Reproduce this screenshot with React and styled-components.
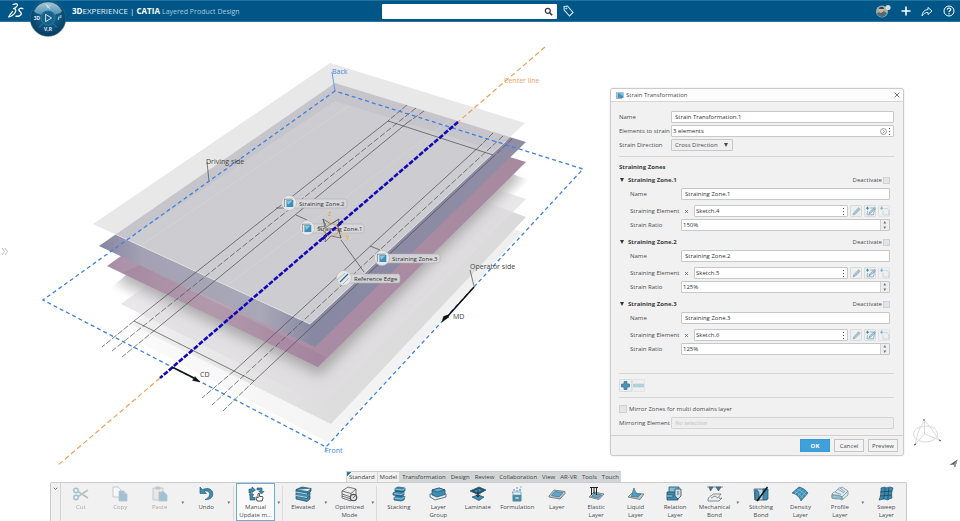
import React, { useState } from "react";
import styled, { createGlobalStyle, css } from "styled-components";

const GlobalStyle = createGlobalStyle`
  * { box-sizing: border-box; }
  body { margin: 0; background: #fff; color: #4b4d50; font: 6px/8px "Open Sans", "Noto Sans", sans-serif; }
  button, input, select { font: inherit; color: inherit; margin: 0; padding: 0; }
  button { border: 0; background: none; cursor: pointer; }
  svg { display: block; flex: none; }
`;

const Page = styled.div`
  display: flex;
  flex-direction: column;
  min-height: 100vh;
`;

/* ---------- top bar ---------- */

const TopBar = styled.header`
  position: relative;
  display: grid;
  grid-template-columns: 1fr auto 1fr;
  align-items: center;
  height: 22px;
  padding: 0 5px 0 7px;
  background: #005686;
  border-top: 1px solid #1f73a0;
  border-bottom: 1px solid #2f7398;
  color: #fff;
`;

const Brand = styled.div`
  display: flex;
  align-items: center;
  gap: 48px;
`;

const BrandTitle = styled.h1`
  margin: 0;
  font: 400 8px/12px "Open Sans", "Noto Sans", sans-serif;
  white-space: nowrap;
  color: #e3eef5;
  b { color: #fff; }
  small { font-size: 7px; color: #a9cbe0; }
`;

const Compass = styled.button`
  position: absolute;
  left: 30px;
  top: -1px;
  z-index: 2;
`;

const SearchGroup = styled.div`
  display: flex;
  align-items: center;
  gap: 6px;
  margin-right: 6px;
`;

const SearchBox = styled.label`
  display: flex;
  align-items: center;
  width: 175px;
  height: 15px;
  padding-right: 4px;
  background: #fff;
  color: #333;
  border-radius: 1px;
  input { flex: 1; min-width: 0; height: 13px; padding: 0 4px; border: 0; outline: 0; background: none; font-size: 8px; }
`;

const TopActions = styled.nav`
  display: flex;
  justify-content: flex-end;
  align-items: center;
  gap: 10px;
  button { display: grid; place-items: center; }
`;

/* ---------- workspace ---------- */

const Workspace = styled.main`
  position: relative;
  display: flex;
  align-items: flex-start;
  flex: 1;
`;

const SceneArea = styled.section`
  flex: 1;
  min-width: 0;
  svg { width: 100%; height: auto; }
`;

const PanelHandle = styled.button`
  position: absolute;
  left: 1px;
  top: 225px;
`;

const SideRail = styled.aside`
  align-self: stretch;
  width: 56px;
  display: flex;
  flex-direction: column;
  justify-content: flex-end;
  align-items: flex-start;
  padding: 0 2px 3px 8px;
  gap: 12px;
  svg:last-child { align-self: flex-end; }
`;

/* ---------- dialog ---------- */

const Dialog = styled.form`
  width: 294px;
  margin-top: 66px;
  background: #f1f1f1;
  border: 1px solid #cbcbcb;
  border-radius: 3px;
  box-shadow: 0 0 2px #ddd;
`;

const TitleBar = styled.div`
  display: flex;
  align-items: center;
  gap: 2px;
  height: 13px;
  padding: 0 3px 0 5px;
  background: #fdfdfd;
  border-bottom: 1px solid #d6d6d6;
  border-radius: 3px 3px 0 0;
  h2 { flex: 1; margin: 0; font: inherit; }
`;

const DialogBody = styled.div`
  padding: 9px 9px 6px 8px;
`;

const FieldGrid = styled.div`
  display: grid;
  grid-template-columns: ${(p) => p.$label}px minmax(0, 1fr);
  align-items: center;
  row-gap: 2px;
  margin-top: ${(p) => p.$top || 0}px;
`;

const Label = styled.label`
  white-space: nowrap;
`;

const boxed = css`
  height: 12px;
  background: #fff;
  border: 1px solid #c6c8ca;
  border-radius: 1px;
`;

const TextField = styled.input`
  ${boxed}
  width: 100%;
  padding: 0 3px;
  color: #333;
  outline: 0;
  &:disabled { background: #eee; border-color: #d4d4d4; }
  &::placeholder { color: #bfc1c3; font-style: italic; }
`;

const FieldShell = styled.div`
  ${boxed}
  display: flex;
  align-items: center;
  flex: 1;
  min-width: 0;
  padding-right: ${(p) => (p.$flush ? 0 : 2)}px;
  gap: 1px;
  input { flex: 1; min-width: 0; height: 10px; padding: 0 1px; border: 0; outline: 0; background: none; color: #333; }
`;

const SelectField = styled.select`
  ${boxed}
  appearance: none;
  width: 62px;
  padding: 0 3px;
  background: #efefef url("data:image/svg+xml,%3Csvg xmlns='http://www.w3.org/2000/svg' width='4' height='4'%3E%3Cpath d='M0 0h4L2 4z' fill='%23444'/%3E%3C/svg%3E") no-repeat right 4px center;
`;

const Divider = styled.hr`
  height: 1px;
  margin: ${(p) => p.$top || 5}px 0 5px;
  border: 0;
  background: #d5d6d7;
`;

const SectionTitle = styled.h3`
  margin: 0;
  font-size: 6px;
  font-weight: 700;
  line-height: 11px;
  color: #3c3e40;
`;

const Zones = styled.div`
  display: flex;
  flex-direction: column;
  gap: 4px;
  padding-right: 4px;
`;

const ZoneHeader = styled.div`
  display: flex;
  justify-content: space-between;
  align-items: center;
  height: 14px;
  margin-bottom: 1px;
`;

const ZoneToggle = styled.button`
  display: flex;
  align-items: center;
  gap: 4px;
  padding-left: 1px;
  font-weight: 700;
  color: #3c3e40;
  &::before { content: ""; border: 2px solid transparent; border-top: 4px solid #333; border-bottom: 0; }
`;

const CheckLabel = styled.label`
  display: flex;
  align-items: center;
  gap: ${(p) => p.$gap || 1}px;
  height: 12px;
`;

const Check = styled.input.attrs({ type: "checkbox" })`
  appearance: none;
  width: ${(p) => p.$size || 7}px;
  height: ${(p) => p.$size || 7}px;
  border: 1px solid #cfd1d2;
  background: #e3e4e5;
  &:checked { background: #42a2da; }
`;

const ZoneFields = styled.div`
  padding-left: 11px;
  ${FieldGrid} > :nth-child(3), ${FieldGrid} > :nth-child(4) { margin-top: 3px; }
`;

const ElementRow = styled.div`
  display: flex;
  align-items: center;
  gap: 2px;
`;

const ClearButton = styled.button`
  width: 11px;
  height: 12px;
  display: grid;
  place-items: center;
`;

const ToolButton = styled.button`
  width: ${(p) => p.$size || 12}px;
  height: ${(p) => p.$size || 12}px;
  display: grid;
  place-items: center;
  border: 1px solid #d9dbdc;
  border-radius: 1px;
  background: #eeefef;
  opacity: ${(p) => (p.$dim ? 0.6 : 1)};
`;

const Spinner = styled.div`
  align-self: stretch;
  display: flex;
  flex-direction: column;
  width: 9px;
  background: #eee;
  border-left: 1px solid #cfd1d2;
  button { flex: 1; display: grid; place-items: center; }
`;

const ButtonRow = styled.div`
  display: flex;
`;

const DialogFooter = styled.div`
  display: flex;
  justify-content: flex-end;
  gap: 4px;
  padding: 3px 5px;
  border-top: 1px solid #cfd0d1;
`;

const PushButton = styled.button`
  width: 30px;
  height: 13px;
  border: 1px solid ${(p) => (p.$primary ? "#3a9ad3" : "#c3c5c7")};
  background: ${(p) => (p.$primary ? "#3fa0da" : "#f4f4f4")};
  color: ${(p) => (p.$primary ? "#fff" : "#4b4d50")};
  font-weight: ${(p) => (p.$primary ? 700 : 400)};
`;

/* ---------- bottom action bar ---------- */

const ActionArea = styled.footer`
  padding: 0 53px 0 50px;
`;

const Tabs = styled.div`
  display: flex;
  justify-content: center;
  padding-left: 10px;
`;

const Tab = styled.button`
  height: 11px;
  padding: 0 2px;
  font-size: 6px;
  white-space: nowrap;
  color: #3c3e40;
  background: ${(p) => (p.$light ? "#f1f1f1" : "#d2d5d6")};
  border-top: 1px solid #c9cbcc;
  border-left: 1px solid #d2d5d6;
  ${(p) => p.$corner && css`background: linear-gradient(135deg, #2d7db0 3px, #f1f1f1 3px);`}
`;

const ActionBar = styled.div`
  display: flex;
  height: 39px;
  background: #f1f1f1;
  border: 1px solid #c9cbcc;
  border-bottom: 0;
  border-radius: 2px 2px 0 0;
  overflow: hidden;
`;

const Expander = styled.button`
  flex: none;
  display: flex;
  justify-content: center;
  width: 10px;
  padding-top: 4px;
  border-right: 1px solid #d3d5d6;
`;

const Action = styled.button`
  flex: 1 1 0;
  min-width: 0;
  display: flex;
  flex-direction: column;
  align-items: center;
  gap: 1px;
  padding-top: 2px;
  font-size: ${(p) => (p.$large ? 7 : 6)}px;
  line-height: 8px;
  color: #4b4d50;
  border: 1px solid ${(p) => (p.$active ? "#6aaed6" : "transparent")};
  background: ${(p) => (p.$active ? "#fafafa" : "none")};
  &:disabled { opacity: 0.45; }
  span { white-space: pre; text-align: center; }
`;

const Caret = styled.button`
  flex: none;
  width: 7px;
  display: grid;
  place-items: center;
`;

const Separator = styled.i`
  flex: none;
  width: 1px;
  margin: 3px ${(p) => (p.$wide ? 2 : 0)}px 0 0;
  background: #dadbdc;
`;

/* ---------- small drawings ---------- */

const Dots = () => (
  <svg width="3" height="8" viewBox="0 0 3 8" fill="#555"><path d="M1 1h1v1H1zM1 4h1v1H1zM1 7h1v1H1z" /></svg>
);
const Tri = ({ up }) => (
  <svg width="4" height="3" viewBox="0 0 4 3" fill="#777"><path d={up ? "M.3 2.5h3L1.8 0z" : "M.3 .5h3L1.8 3z"} /></svg>
);
const SheetIcon = () => (
  <svg width="8" height="8" viewBox="0 0 8 8">
    <path d="M1.5 1.5h6v5.5h-6z" fill="#3f94bd" /><path d="M2.5 2.5 7 2v3z" fill="#87c1dc" />
    <path d="M.5 1v6.5H6" fill="none" stroke="#777" strokeWidth=".6" />
  </svg>
);
const Pencil = () => (
  <svg width="9" height="9" viewBox="0 0 9 9"><path d="m1 8 .7-2.3L6.6.8l1.6 1.5-5 5z" fill="#a9c3d2" stroke="#7d9bae" strokeWidth=".5" /></svg>
);
const SketchEdit = () => (
  <svg width="11" height="10" viewBox="0 0 11 10" fill="none">
    <path d="M1 2.2h3M2.5.7v3" stroke="#3f8fb3" strokeWidth="1" />
    <path d="M4.8 2H10L8.4 8.8H2L2.6 5" stroke="#6fa1bd" strokeWidth=".7" />
    <path d="m4 7.8.6-1.8L9.2 1.8l1.1 1L5.6 7z" fill="#bcd6e4" stroke="#477f9e" strokeWidth=".5" />
  </svg>
);
const SketchNew = () => (
  <svg width="11" height="10" viewBox="0 0 11 10" fill="none">
    <path d="M1 2.2h3.4M2.7.5v3.4" stroke="#3f8fb3" strokeWidth="1.1" />
    <path d="M5.5 2.5h2.7L10 4.8V9H4V5" stroke="#7f97a5" strokeWidth=".7" strokeDasharray="1.3 .6" />
  </svg>
);

const LogoMark = () => (
  <svg width="17" height="16" viewBox="0 0 17 16" fill="none" stroke="#fff" strokeLinecap="round" strokeLinejoin="round">
    <path d="M6 1.5C8.2.5 11.2.6 10.4 2.4 9.8 3.8 8 5 6.500 5.700c2 .1 2.900.9 2 3C7.400 11.400 4 13.800 1.600 14c1.200-2 2.600-4 4-5.600" strokeWidth="1.2" />
    <path d="M15.8 5.6c-1.4-.7-3.7-.3-4 1-.3 1.5 2.7 2.3 2.5 4.2-.2 1.7-2.8 2.9-5.3 2.4" strokeWidth="1.4" />
  </svg>
);

const CompassArt = () => (
  <svg width="36" height="37" viewBox="0 0 36 37">
    <defs>
      <radialGradient id="compassBody" cx=".5" cy=".4" r=".6"><stop offset="0" stopColor="#1e7199" /><stop offset=".7" stopColor="#0c4c75" /><stop offset="1" stopColor="#08395c" /></radialGradient>
      <linearGradient id="compassTop" x1="0" y1="0" x2="0" y2="1"><stop offset="0" stopColor="#a6c8da" /><stop offset="1" stopColor="#4d8fb1" /></linearGradient>
    </defs>
    <circle cx="18" cy="18.5" r="17.8" fill="url(#compassBody)" stroke="#2c6e92" strokeWidth=".6" />
    <path d="M4 11A15.500 15.500 0 0 1 32 11C29 15 27 13 25 15A8 8 0 0 0 11 15C9 13 7 15 4 11Z" fill="url(#compassTop)" />
    <circle cx="18" cy="18" r="7" fill="#15618b" stroke="#3683aa" strokeWidth=".6" />
    <path d="m15.6 14.3 6 3.7-6 3.7z" fill="none" stroke="#cfe3ee" />
    <path d="M9 27.500l4-4M27 27.500l-4-4" stroke="#3b89b0" strokeWidth=".8" />
    <path d="m16 4 2 4 2-3m-3 0 3 4" fill="none" stroke="#e3eff6" strokeWidth=".7" />
    <g fill="#dcecf5" fontFamily="Open Sans, sans-serif" fontWeight="700" fontSize="5" textAnchor="middle">
      <text x="7" y="20">3D</text><text x="29.5" y="20" fontStyle="italic">i²</text><text x="18" y="31">V,R</text>
    </g>
  </svg>
);

const Marker = ({ x, y, w, edge, children }) => (
  <g>
    <rect x={x} y={y - 4} width={w} height="9" rx="2.5" fill="#d9d9da" fillOpacity=".9" stroke="#b0b0b3" strokeWidth=".6" />
    <circle cx={x} cy={y} r="7.5" fill="#e6e7e8" stroke="#babbbd" strokeWidth=".7" />
    {edge ? (
      <g fill="none" transform={`translate(${x} ${y})`}><path d="m-4 4 8-8" stroke="#246f9c" strokeWidth="1.3" /><path d="M-7 2 1-5M-1 6l6-6" stroke="#888" strokeWidth=".5" /></g>
    ) : (
      <g transform={`translate(${x - 4} ${y - 4})`}>
        <path d="M1.5 1h6.8v7H1.5z" fill="#3a8fbb" /><path d="M2 1.5h5.5L3 6z" fill="#8cc8e1" />
        <path d="M-.6 8V.2h8" fill="none" stroke="#585858" strokeWidth=".6" />
      </g>
    )}
    <text x={x + 10} y={y + 3} fontSize="6" fill="#333">{children}</text>
  </g>
);

const Scene = () => (
  <svg viewBox="0 22 610 449" role="img" aria-label="Layered product view" fontFamily="Open Sans, Noto Sans, sans-serif">
    <defs>
      <linearGradient id="under" x1="0" y1="0" x2="1" y2="0"><stop offset="0" stopColor="#f0f0f0" /><stop offset=".5" stopColor="#dddddd" /><stop offset="1" stopColor="#dbdadb" /></linearGradient>
      <linearGradient id="pink" x1="0" y1="0" x2="1" y2="0"><stop offset="0" stopColor="#a88ea5" /><stop offset=".25" stopColor="#bba8b6" /><stop offset=".5" stopColor="#aa8ba4" /><stop offset="1" stopColor="#a88a9f" /></linearGradient>
      <linearGradient id="violet" x1="0" y1="0" x2="1" y2="0"><stop offset="0" stopColor="#8784a0" /><stop offset=".1" stopColor="#a3a1b3" /><stop offset=".38" stopColor="#a9a8b8" /><stop offset=".5" stopColor="#8888a2" /><stop offset="1" stopColor="#918da6" /></linearGradient>
      <linearGradient id="low" x1="0" y1="0" x2="1" y2="0"><stop offset="0" stopColor="#fafafa" /><stop offset="1" stopColor="#efeff0" /></linearGradient>
      <filter id="soft" x="-10%" y="-10%" width="120%" height="120%"><feGaussianBlur stdDeviation="7" /></filter>
      <filter id="edge"><feGaussianBlur stdDeviation="3" /></filter>
      <clipPath id="topSheet"><path d="M93 224 330 63 525 123 310 324Z" /></clipPath>
      <clipPath id="lowSheets"><path d="M112 287 330 100 528 180 515 194 526 199 508 211 526 217 512 229 522 232 329 443 130 337 136 328 121 304Z" /></clipPath>
    </defs>

    <path d="M130 337 360 170 522 232 329 443Z" fill="url(#low)" />
    <path d="M132 325 350 150 526 217 331 424Z" fill="url(#under)" />
    <path d="M121 304 345 140 526 199 323 405Z" fill="#dfdddf" fillOpacity=".7" />
    <path d="M116 287 340 120 524 180 320 384Z" fill="#e4e4e4" fillOpacity=".6" filter="url(#edge)" />
    <g clipPath="url(#lowSheets)"><path d="M107 272 335 110 524 170 320 376Z" fill="#8e8c8e" fillOpacity=".7" filter="url(#soft)" /></g>
    <path d="M107 266 335 103 526 162 318 367Z" fill="url(#pink)" />
    <path d="m122 273 18-8 186 92-8 10Z" fill="#98718f" fillOpacity=".25" />
    <path d="M99 246 335 83 526 142 315 347Z" fill="url(#violet)" />
    <path d="M93 224 330 63 525 123 310 324Z" fill="#e8e8e8" />
    <g clipPath="url(#topSheet)">
      <path d="M99 246 335 83 526 142 315 347Z" fill="#c6c5cb" />
      <path d="M107 253 335 101 526 160 318 367Z" fill="#cdccd1" />
      <path d="M140 246 350 105M230 283 450 120" stroke="#d9d8dc" strokeWidth=".6" />
    </g>
    <path d="M115 234 310 324 506 141" fill="none" stroke="#dedee3" strokeWidth="1" />

    <g fill="none" stroke="#4a4a4e" strokeWidth=".7">
      <path d="M388 121 134 321M407 123 155 330M388 121 493 155M134 321 254 381M481 145 234 371M493 157 254 381" />
      <path d="M407 105 388 121M134 321 102 347M424 111 407 123M155 330 122 357M493 133 481 145M234 371 202 398M512 139 493 157M254 381 223 411" strokeDasharray="6 1.5" />
      <path d="M416 108 112 351M503 136 212 405" strokeDasharray="6 2" />
      <path d="M296 215 307 220M276 208 286 208M370 246 380 250M341 240 364 272M207 162 209 181M470 270 474 286" />
    </g>
    <g fill="none" stroke="#3f82e0" strokeWidth="1.3" strokeDasharray="4 3">
      <path d="M335 91 43 300 326 447 583 169Z" />
    </g>
    <path d="M332 72 335 91M326 447l-1 5" fill="none" stroke="#4b8ade" strokeWidth=".8" />
    <path d="M545 47 458 122M160 378 57 466" stroke="#f2a055" strokeWidth="1.2" strokeDasharray="5 3" />
    <path d="M458 122 160 378" stroke="#1208b8" strokeWidth="2.6" strokeDasharray="5 1.6" />
    <g stroke="#111" strokeWidth="1.6" fill="#111"><path d="M172 367 194 378M474 287 447 317" /><path d="m200 382-7.500-1.500 2.500-4ZM442 322l1.500-5.500 4-1.500 1.500 2Z" strokeWidth=".4" /></g>

    <g fontSize="7">
      <text x="332" y="74" fill="#4386dd">Back</text>
      <text x="325" y="453" fill="#4386dd">Front</text>
      <text x="504" y="83" fill="#f0a265">Center line</text>
      <text x="206" y="164" fill="#444">Driving side</text>
      <text x="470" y="269" fill="#444">Operator side</text>
      <text x="200" y="377" fill="#444">CD</text>
      <text x="453" y="319" fill="#444">MD</text>
    </g>

    <Marker x={289} y={203} w={58}>Straining Zone.2</Marker>
    <Marker x={307} y={228} w={57}>Straining Zone.1</Marker>
    <Marker x={382} y={258} w={58}>Straining Zone.3</Marker>
    <Marker x={344} y={278} w={56} edge>Reference Edge</Marker>

    <path d="M341 223 320 241" stroke="#1208b8" strokeWidth="2.6" strokeDasharray="5 1.6" />
    <g fill="none" stroke="#44423c" strokeWidth=".6">
      <path d="m323 219 8 5 8-5-1 9 3 10-10-2-6 6 1-9-8-6 8-1Z" />
      <path d="m323 219 2 9 6-4M339 219l-8 5M341 238l-3-10" />
      <path d="m326 227 5-4 7 3-1 8-7 3-5-4Z" stroke="#cf8b3d" />
    </g>
    <path d="M330 217v6M339 234l9 2" stroke="#edbf65" strokeWidth=".8" />
    <text x="328" y="216" fontSize="7" fill="#ee9a3a">z</text>
    <text x="346" y="239" fontSize="7" fill="#e3b336">y</text>
  </svg>
);

const B = "#3c8db3", D = "#244f65", L = "#a9d3e6";
const art = {
  cut: <g fill="none" stroke={B} strokeWidth="1.6"><path d="M6 5.500 16 12M6 10.500 16 4" stroke="#778893" /><circle cx="4" cy="4.500" r="2.200" /><circle cx="4" cy="11.500" r="2.200" /></g>,
  copy: <g stroke="#778893" strokeWidth=".8"><path d="M2 1h5l3 3v7H2z" fill="#fff" /><path d="M8 5h5l3 3v7H8z" fill={B} /><path d="M13 5v3h3" fill={L} /></g>,
  paste: <g stroke="#778893" strokeWidth=".8"><path d="M2 2h10v12H2z" fill="#ddd" /><path d="M5 1h4v2H5z" fill="#999" /><path d="M8 6h5l3 3v6H8z" fill={B} /></g>,
  undo: <path d="M3 1v6.500h6.500L7.200 5.400C10 4.200 12.800 5.500 12.600 8.500c-.2 2.500-2 4-4.600 5 5 .3 7.800-2 7.800-5.800 0-4.500-5.300-6.800-10.300-4z" fill={B} stroke={D} strokeWidth=".6" />,
  manual: <g fill={B} stroke={D} strokeWidth=".6"><path d="M2 7V3h3V1l3.500 3L5 6.500V5H4v2zM10 2h5v3.500h2L14.500 8 12 5.500h1.200V4H10zM2 9l2.500-2L7 9H5.500v2.500H8V14H3V9z" /><path d="M10 15 9 11.500l1-.6 1 1V7.500h1.500v3h3L16 12l-1 3z" fill="#fff" stroke="#444" strokeWidth=".9" /></g>,
  elevated: <g stroke={D} strokeWidth=".7"><path d="m2 10 12 2 2-2v3l-3 2.500L2 13z" fill={B} /><path d="m2 6.500 12 2 2-2v3L13 12 2 9.500z" fill={B} /><path d="M2 3.500 8 1l9 1.500-3 3L2 4zM2 4v2l12 2 3-3V2.500" fill="#317da3" /><path d="m2 9.500 11 2M2 6l11 2" stroke="#fff" /></g>,
  optimized: <g stroke="#555" strokeWidth=".8" fill="#eee"><path d="M2 5 8 1l8 2v7l-5 5-9-3z" /><path d="m2 5 9 2.500L16 3M11 7.500V15M2 8l9 3M2 10l9 3" fill="none" /><circle cx="13.500" cy="11.500" r="3.200" fill="#ddd" strokeWidth="1.200" /><path d="m13 12 2-2" /></g>,
  stacking: <g stroke={D} strokeWidth=".7" fill={B}><path d="M4 11.500 7 9.500l8 1-1 3.500-3 1-7-1zM3 7 6 5l8 1v3l-3 1.500-8-1.500zM5 2.500 8 1l7 1v3l-3 1-7-1z" /><path d="m5 3 7 1 3-1.500M4 7.500l7 1 3-1.500M4 12l7 1 4-2" stroke={L} fill="none" /></g>,
  group: <g stroke={D} strokeWidth=".7"><path d="M1 8v3l5 3 11-3V8L11 6z" fill="#e6ecef" /><path d="M3 4v5l5 2 8-2.500V4L10 2z" fill={B} /><path d="m3 4 5 2 8-2-6-2z" fill="#63afd0" /></g>,
  laminate: <g stroke={D} strokeWidth=".7"><path d="m1 5 9-4 7 3-8 4.500z" fill={D} /><path d="m4 5 6-2.500 4 1.500-5 3z" fill={B} /><path d="m3 11 6-2 6 2-5 3.500z" fill={B} /><path d="M9 4v6M7 8.500 9 11l2-2.500" stroke="#111" fill="none" /></g>,
  formulation: <g stroke="#688c9e" strokeWidth=".7"><path d="M4 6h9v9H5V7z" fill="#e8f4f9" /><path d="M5 9h8v6H5z" fill={B} /><path d="M7 11h4v2H7z" fill="#d7edf6" /><g fill="#7bb9d6" stroke="none"><circle cx="6" cy="4" r="1" /><circle cx="9" cy="2" r="1" /><circle cx="12" cy="4" r="1.200" /><circle cx="9" cy="5" r="1" /><circle cx="13" cy="1" r=".8" /></g></g>,
  layer: <g stroke="#5e7480" strokeWidth=".8"><path d="m1 10 5-6 11 1.500v2L12 13 1 11z" fill="#b8c6cd" /><path d="m3.500 9.500 3.500-4 8 1-4 4.500z" fill="#59a9cc" /></g>,
  elastic: <g stroke="#5e7480" strokeWidth=".8"><path d="m2 11 5-5 10 2-5 5.500z" fill="#b8c6cd" /><path d="m4.500 10.500 3-3 7 1.500-3 3z" fill="#59a9cc" /><path d="M3 1.500h8M4.500 1v8M7 1v7M9.500 1v8" stroke="#222" strokeWidth="1" fill="none" /></g>,
  liquid: <g stroke="#5e7480" strokeWidth=".8"><path d="m1 11 4-4 12 1-4 5.500z" fill="#b8c6cd" /><path d="M4 10.500c2-2 1-4 3-8.500 1 4 3 5 3 6h4l-3 3z" fill="#4b9fc6" /></g>,
  relation: <g stroke={D} strokeWidth=".8"><path d="M3 1h10v6H3z" fill="#7dbfda" /><path d="M1 6h11v8H1z" fill={B} /><path d="M9 3h6v7l-3 3-3-3z" fill="#d7dee2" /><path d="M12 5v4" /><path d="M1 9h6v2H1" fill={L} /></g>,
  mechanical: <g stroke="#50626d" strokeWidth=".7"><path d="M1 1h16M3 1l1.500 4L7 1zM10 1l2.500 4L15 1z" fill="#2f7ca2" /><path d="M2 13c2-4 4-3 5-5h8c-1 2-3 2-2 4 1 1 2 0 3 0l-3 3H2z" fill="#eee" /><path d="m5 12 4-2 3 2" fill="none" /></g>,
  stitching: <g stroke={D} strokeWidth=".7"><path d="M2 3h13v11H3z" fill="#bed5de" /><path d="M3 4c3 0 4 1 4 5v5H3zM11 3h5v10l-5 1z" fill={B} /><path d="M15.500 1 5 15" stroke="#111" strokeWidth="1.500" /></g>,
  density: <g stroke={D} strokeWidth=".6" fill={B}><path d="M1 7 8 1c3 .5 7 3 9 6l-7 8c-1-3-4-7-9-8z" /><path d="M3.500 5.500c4 1 7 4 9 7.500M6 3.500c4 1 7 3 9 6M4 8 10.500 2M7 10l6-6.500M9 12.500l6.500-7.500" fill="none" stroke="#9ecfe3" /></g>,
  profile: <g stroke="#6a8a9a" strokeWidth=".7" fill="#dce8ee"><path d="M1 8c2-3 3-1 5-4s4-2 5-3l6 4v4l-6 5c-2-2-7 0-10-2z" /><path d="M1 9c3 1 7 0 10 2v2C8 11 4 13 1 12z" fill="#9ac6da" /><path d="M1 8c3 2 7 0 10 3l6-6M11 11v3M4 6l6 2.500M7 3l6 4M9 2l5 4" fill="none" /></g>,
  sweep: <g stroke={D} strokeWidth=".7" fill={B}><path d="M4 2 8 1l1 1 4-1 3 1c-1 3-2 6-1 10l-3 1-1 1-4-1-5 1c2-4 2-8 2-12z" /><path d="M8 2c0 4 0 8-2 11M12 2c-1 4-1 8-1 11M3 6l12-1M3 10l12-1" fill="none" stroke="#183e51" /></g>,
};

const actions = [
  { id: "cut", text: "Cut", off: true },
  { id: "copy", text: "Copy", off: true },
  { id: "paste", text: "Paste", off: true, caret: true },
  { id: "undo", text: "Undo", caret: true, sep: "wide" },
  { id: "manual", text: "Manual\nUpdate m...", active: true, caret: true, sep: "thin" },
  { id: "elevated", text: "Elevated", caret: true },
  { id: "optimized", text: "Optimized\nMode", caret: true, sep: "wide" },
  { id: "stacking", text: "Stacking" },
  { id: "group", text: "Layer\nGroup" },
  { id: "laminate", text: "Laminate" },
  { id: "formulation", text: "Formulation" },
  { id: "layer", text: "Layer" },
  { id: "elastic", text: "Elastic\nLayer" },
  { id: "liquid", text: "Liquid\nLayer" },
  { id: "relation", text: "Relation\nLayer" },
  { id: "mechanical", text: "Mechanical\nBond", caret: true },
  { id: "stitching", text: "Stitching\nBond" },
  { id: "density", text: "Density\nLayer" },
  { id: "profile", text: "Profile\nLayer", caret: true },
  { id: "sweep", text: "Sweep\nLayer" },
];

const tabs = ["Standard", "Model", "Transformation", "Design", "Review", "Collaboration", "View", "AR-VR", "Tools", "Touch"];

const zones = [
  { n: 1, sketch: "Sketch.4", ratio: "150%" },
  { n: 2, sketch: "Sketch.5", ratio: "125%" },
  { n: 3, sketch: "Sketch.6", ratio: "125%" },
];

function Zone({ n, sketch, ratio }) {
  const [open, setOpen] = useState(true);
  return (
    <section>
      <ZoneHeader>
        <ZoneToggle type="button" aria-expanded={open} onClick={() => setOpen(!open)}>Straining Zone.{n}</ZoneToggle>
        <CheckLabel>Deactivate<Check /></CheckLabel>
      </ZoneHeader>
      {open && (
        <ZoneFields>
          <FieldGrid $label={51}>
            <Label htmlFor={`zn${n}`}>Name</Label>
            <TextField id={`zn${n}`} defaultValue={`Straining Zone.${n}`} />
            <Label htmlFor={`ze${n}`}>Straining Element</Label>
            <ElementRow>
              <ClearButton type="button" aria-label="Clear element"><svg width="5" height="5" viewBox="0 0 5 5"><path d="m1 1 3 3m0-3L1 4" stroke="#666" strokeWidth=".8" /></svg></ClearButton>
              <FieldShell><input id={`ze${n}`} defaultValue={sketch} /><Dots /></FieldShell>
              <ToolButton type="button" aria-label="Edit"><Pencil /></ToolButton>
              <ToolButton type="button" aria-label="Edit sketch"><SketchEdit /></ToolButton>
              <ToolButton type="button" aria-label="New sketch" $dim><SketchNew /></ToolButton>
            </ElementRow>
            <Label htmlFor={`zr${n}`}>Strain Ratio</Label>
            <FieldShell $flush>
              <input id={`zr${n}`} defaultValue={ratio} />
              <Spinner>
                <button type="button" aria-label="Increase"><Tri up /></button>
                <button type="button" aria-label="Decrease"><Tri /></button>
              </Spinner>
            </FieldShell>
          </FieldGrid>
        </ZoneFields>
      )}
    </section>
  );
}

function StrainDialog() {
  return (
    <Dialog onSubmit={(e) => e.preventDefault()}>
      <TitleBar>
        <SheetIcon />
        <h2>Strain Transformation</h2>
        <button type="button" aria-label="Close"><svg width="6" height="6" viewBox="0 0 6 6"><path d="m.7.7 4.600 4.600m0-4.600L.7 5.300" stroke="#555" strokeWidth=".8" /></svg></button>
      </TitleBar>
      <DialogBody>
        <FieldGrid $label={52}>
          <Label htmlFor="name">Name</Label>
          <TextField id="name" defaultValue="Strain Transformation.1" />
          <Label htmlFor="elements">Elements to strain</Label>
          <FieldShell>
            <input id="elements" defaultValue="3 elements" />
            <svg width="7" height="7" viewBox="0 0 7 7" fill="none" stroke="#666" strokeWidth=".6"><circle cx="3.500" cy="3.500" r="3" /><path d="m2.800 1.800 1.700 1.700-1.700 1.700" /></svg>
            <Dots />
          </FieldShell>
          <Label htmlFor="direction">Strain Direction</Label>
          <SelectField id="direction"><option>Cross Direction</option></SelectField>
        </FieldGrid>
        <Divider />
        <SectionTitle>Straining Zones</SectionTitle>
        <Zones>{zones.map((z) => <Zone key={z.n} {...z} />)}</Zones>
        <Divider $top={18} />
        <ButtonRow>
          <ToolButton type="button" $size={13} aria-label="Add zone"><svg width="9" height="9" viewBox="0 0 9 9"><path d="M3 .5h3V3h2.500v3H6v2.500H3V6H.5V3H3z" fill="#4a97ba" stroke="#256484" strokeWidth=".6" /></svg></ToolButton>
          <ToolButton type="button" $size={13} $dim aria-label="Remove zone"><svg width="11" height="9" viewBox="0 0 11 9"><path d="M.5 3h10v3H.5z" fill="#8dc0d8" stroke="#6d9db3" strokeWidth=".5" /></svg></ToolButton>
        </ButtonRow>
        <Divider />
        <CheckLabel $gap={2}><Check $size={8} />Mirror Zones for multi domains layer</CheckLabel>
        <FieldGrid $label={52} $top={2}>
          <Label htmlFor="mirror">Mirroring Element</Label>
          <TextField id="mirror" placeholder="No selection" disabled />
        </FieldGrid>
      </DialogBody>
      <DialogFooter>
        <PushButton $primary type="submit">OK</PushButton>
        <PushButton type="button">Cancel</PushButton>
        <PushButton type="button">Preview</PushButton>
      </DialogFooter>
    </Dialog>
  );
}

export default function App() {
  return (
    <Page>
      <GlobalStyle />
      <TopBar>
        <Brand>
          <LogoMark />
          <BrandTitle><b>3D</b>EXPERIENCE | <b>CATIA</b> <small>Layered Product Design</small></BrandTitle>
        </Brand>
        <Compass aria-label="Compass"><CompassArt /></Compass>
        <SearchGroup>
          <SearchBox>
            <input type="search" aria-label="Search" />
            <svg width="9" height="9" viewBox="0 0 9 9" fill="none" stroke="#333"><circle cx="3.800" cy="3.800" r="2.500" strokeWidth="1.200" /><path d="m5.700 5.700 2.500 2.500" strokeWidth="1.600" /></svg>
          </SearchBox>
          <button aria-label="Tags"><svg width="11" height="12" viewBox="0 0 11 12" fill="none" stroke="#d9eaf4"><path d="M1 1.500 4.500 1 10 7.500 6.500 11 1.200 5z" strokeWidth="1.100" /><circle cx="3.300" cy="3.500" r=".6" /></svg></button>
        </SearchGroup>
        <TopActions>
          <button aria-label="Profile">
            <svg width="16" height="14" viewBox="0 0 16 14"><circle cx="7" cy="7.500" r="6" fill="#9eb3ab" /><path d="M2 10c2-4 3 1 5-2s4 2 5 1c-1 4-7 6-10 1" fill="#596973" /><circle cx="6.500" cy="6" r="2.200" fill="#d2b4a1" /><path d="M4 5c0-3 5-3 5 0z" fill="#42424a" /><circle cx="13" cy="3.500" r="2.600" fill="#d7dadd" /></svg>
          </button>
          <button aria-label="Add"><svg width="10" height="10" viewBox="0 0 10 10"><path d="M5 .5v9M.5 5h9" stroke="#fff" strokeWidth="1.600" /></svg></button>
          <button aria-label="Share"><svg width="12" height="11" viewBox="0 0 12 11"><path d="M7 1.500 11 5 7 8.500v-2C4.500 6.300 2.500 7.500 1 10c.2-4 2.500-6.300 6-6.500z" fill="none" stroke="#e5f1f8" /></svg></button>
          <button aria-label="Help"><svg width="12" height="12" viewBox="0 0 12 12" fill="none" stroke="#fff"><circle cx="6" cy="6" r="5" /><path d="M4.300 4.700c0-2.300 3.500-2.200 3.400-.1C7.600 5.800 6 5.800 6 7.200M6 8.200v1.200" strokeWidth="1.200" /></svg></button>
        </TopActions>
      </TopBar>

      <Workspace>
        <SceneArea><Scene /></SceneArea>
        <PanelHandle aria-label="Open panel"><svg width="8" height="9" viewBox="0 0 8 9"><path d="m1 1 2.500 3.500L1 8m3-7 2.500 3.500L4 8" fill="none" stroke="#aaa" strokeWidth=".8" /></svg></PanelHandle>
        <StrainDialog />
        <SideRail>
          <svg width="30" height="28" viewBox="0 0 30 28" fill="none" stroke="#d9dadb"><ellipse cx="13.500" cy="15" rx="12" ry="8" /><path d="M12.500 2v13l-9 10M12.500 15l15 6M12.500 2C8 8 5 14 3.500 25M12.500 2c5 4 8 10 15 19" /><path d="M12 0v2M2 26l2-1M27 21l2 1" stroke="#444" /></svg>
          <svg width="9" height="9" viewBox="0 0 9 9"><path d="M8.500.5.5 6l4-.5L6 8.500z" fill="#555" /><path d="m4.500 5.500 4-5L6 8.500z" fill="#999" /></svg>
        </SideRail>
      </Workspace>

      <ActionArea>
        <Tabs role="tablist">
          {tabs.map((t, i) => <Tab key={t} role="tab" aria-selected={i === 1} $light={i < 2} $corner={i === 0}>{t}</Tab>)}
        </Tabs>
        <ActionBar>
          <Expander aria-label="Collapse"><svg width="5" height="4" viewBox="0 0 5 4"><path d="m.7.700 1.800 1.800L4.300.7" fill="none" stroke="#555" strokeWidth=".8" /></svg></Expander>
          {actions.map((a) => (
            <React.Fragment key={a.id}>
              <Action disabled={a.off} $active={a.active}>
                <svg width="18" height="16" viewBox="0 0 18 16">{art[a.id]}</svg>
                <span>{a.text}</span>
              </Action>
              {a.caret && <Caret aria-label={`${a.id} options`}><Tri /></Caret>}
              {a.sep && <Separator $wide={a.sep === "wide"} />}
            </React.Fragment>
          ))}
        </ActionBar>
      </ActionArea>
    </Page>
  );
}
